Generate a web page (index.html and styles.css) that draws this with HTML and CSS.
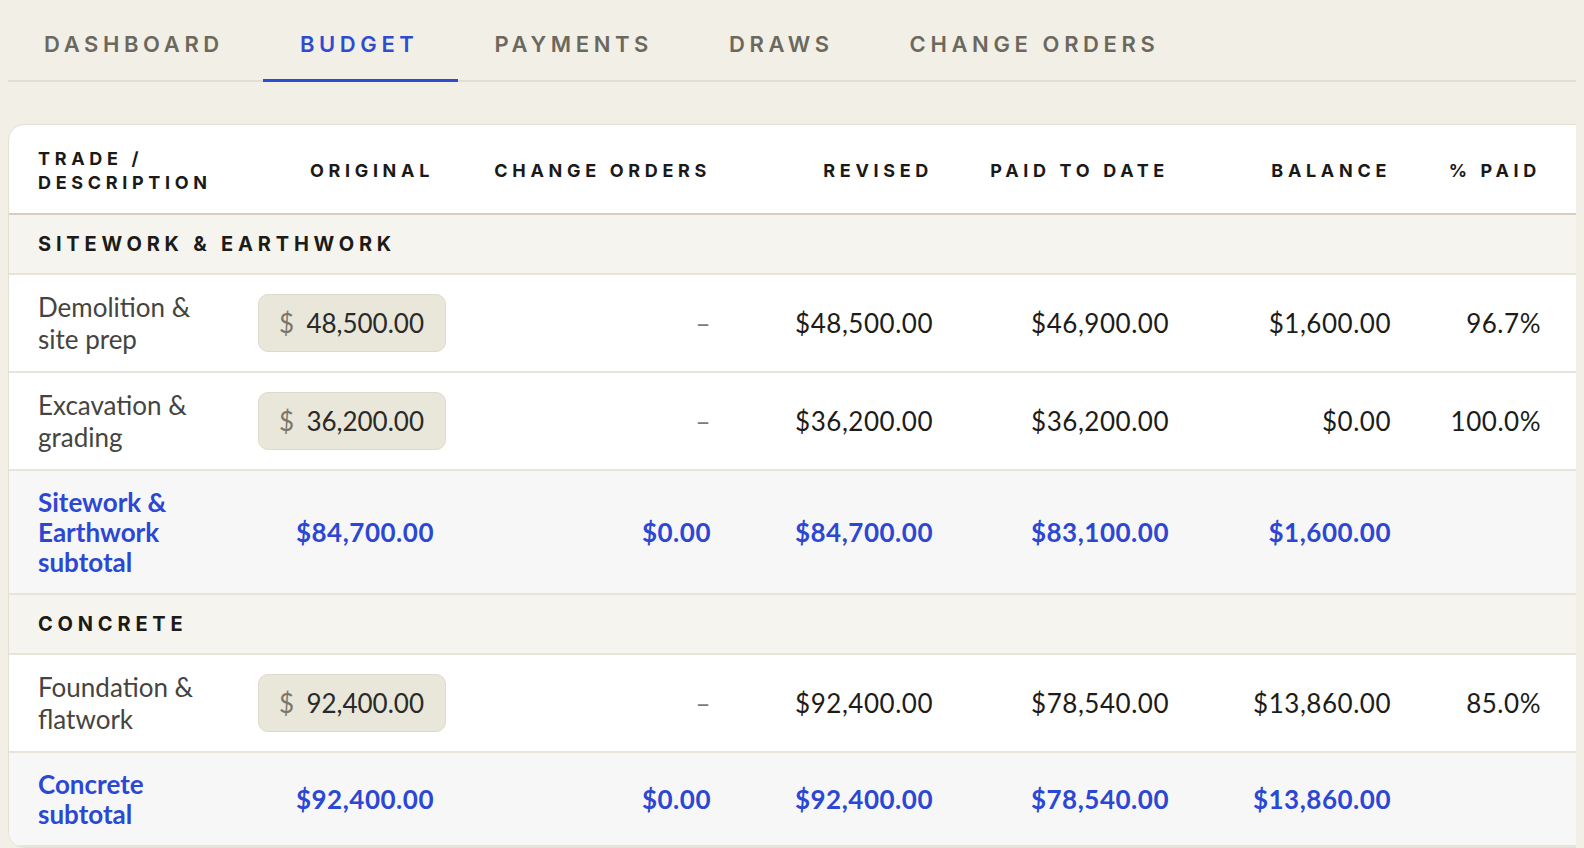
FILE: index.html
```html
<!DOCTYPE html>
<html lang="en">
<head>
  <meta charset="UTF-8">
  <meta name="viewport" content="width=device-width, initial-scale=1.0">
  <title>Budget</title>
  <link rel="stylesheet" href="styles.css">
</head>
<body>
  <nav class="tabs">
    <a class="tab">DASHBOARD</a>
    <a class="tab active">BUDGET</a>
    <a class="tab">PAYMENTS</a>
    <a class="tab">DRAWS</a>
    <a class="tab">CHANGE ORDERS</a>
  </nav>

  <div class="card">
    <table class="budget">
      <colgroup>
        <col class="c-trade">
        <col class="c-orig">
        <col class="c-co">
        <col class="c-rev">
        <col class="c-paid">
        <col class="c-bal">
        <col class="c-pct">
        <col class="c-extra">
      </colgroup>
      <thead>
        <tr>
          <th class="trade">TRADE / DESCRIPTION</th>
          <th>ORIGINAL</th>
          <th>CHANGE ORDERS</th>
          <th>REVISED</th>
          <th>PAID TO DATE</th>
          <th>BALANCE</th>
          <th>% PAID</th>
          <th></th>
        </tr>
      </thead>
      <tbody>
        <tr class="section">
          <td colspan="8">SITEWORK &amp; EARTHWORK</td>
        </tr>
        <tr class="item">
          <td class="trade">Demolition &amp; site prep</td>
          <td><span class="amount-input"><span class="cur">$</span><span>48,500.00</span></span></td>
          <td class="dash">–</td>
          <td>$48,500.00</td>
          <td>$46,900.00</td>
          <td>$1,600.00</td>
          <td>96.7%</td>
          <td></td>
        </tr>
        <tr class="item">
          <td class="trade">Excavation &amp; grading</td>
          <td><span class="amount-input"><span class="cur">$</span><span>36,200.00</span></span></td>
          <td class="dash">–</td>
          <td>$36,200.00</td>
          <td>$36,200.00</td>
          <td>$0.00</td>
          <td>100.0%</td>
          <td></td>
        </tr>
        <tr class="subtotal">
          <td class="trade">Sitework &amp; Earthwork subtotal</td>
          <td>$84,700.00</td>
          <td>$0.00</td>
          <td>$84,700.00</td>
          <td>$83,100.00</td>
          <td>$1,600.00</td>
          <td></td>
          <td></td>
        </tr>
        <tr class="section">
          <td colspan="8">CONCRETE</td>
        </tr>
        <tr class="item">
          <td class="trade">Foundation &amp; flatwork</td>
          <td><span class="amount-input"><span class="cur">$</span><span>92,400.00</span></span></td>
          <td class="dash">–</td>
          <td>$92,400.00</td>
          <td>$78,540.00</td>
          <td>$13,860.00</td>
          <td>85.0%</td>
          <td></td>
        </tr>
        <tr class="subtotal">
          <td class="trade">Concrete subtotal</td>
          <td>$92,400.00</td>
          <td>$0.00</td>
          <td>$92,400.00</td>
          <td>$78,540.00</td>
          <td>$13,860.00</td>
          <td></td>
          <td></td>
        </tr>
      </tbody>
    </table>
  </div>
</body>
</html>
```

FILE: styles.css
```css
html {
    overflow: hidden;
}
body {
    margin: 8px;
    background-color: #f2efe7;
    font-family: Lato, "Open Sans", sans-serif;
    color: #1c1c1a;
}
.tabs {
    display: flex;
    border-bottom: 2px solid #e2ded1;
    height: 72px;
}
.tab {
    display: flex;
    align-items: center;
    padding: 0 39px 0 37px;
    font-family: Inter, sans-serif;
    font-weight: 600;
    font-size: 22px;
    letter-spacing: 0.21em;
    color: #6b685d;
    border-bottom: 3px solid transparent;
    margin-bottom: -2px;
}
.tab:first-child {
    padding-left: 36px;
}
.tab.active {
    color: #2f4bd1;
    border-bottom-color: #2f4bd1;
}
.card {
    margin-top: 42px;
    width: 1660px;
    background-color: #fff;
    border: 1px solid #e3dfd3;
    border-radius: 16px;
    overflow: hidden;
}
.budget {
    table-layout: fixed;
    border-collapse: collapse;
    width: 1660px;
}
.c-trade { width: 235px; }
.c-orig { width: 218px; }
.c-co { width: 277px; }
.c-rev { width: 222px; }
.c-paid { width: 236px; }
.c-bal { width: 222px; }
.c-pct { width: 150px; }
.budget th {
    padding: 22px 28px 18px 12px;
    text-align: right;
    vertical-align: middle;
    font-family: Inter, sans-serif;
    font-weight: 700;
    font-size: 18px;
    line-height: 24px;
    letter-spacing: 0.26em;
    color: #1a1a18;
    border-bottom: 2px solid #d4cfbf;
}
.budget th.trade {
    padding-left: 29px;
    padding-right: 20px;
    text-align: left;
}
.budget td {
    padding: 16px 28px 16px 12px;
    text-align: right;
    vertical-align: middle;
    letter-spacing: 0.02em;
    border-bottom: 2px solid #e8e4d8;
}
.budget td.trade {
    padding-left: 29px;
    padding-right: 20px;
    text-align: left;
    letter-spacing: 0;
}
.budget .section td {
    background-color: #f6f4ee;
    padding: 16px 29px;
    text-align: left;
    font-family: Inter, sans-serif;
    font-weight: 700;
    font-size: 20px;
    line-height: 26px;
    letter-spacing: 0.24em;
    color: #1c1b18;
}
.item td {
    font-size: 26px;
    line-height: 32px;
}
.item td.trade {
    color: #45443f;
}
.item td.dash {
    color: #7d7b72;
}
.amount-input {
    display: inline-flex;
    justify-content: space-between;
    align-items: center;
    box-sizing: border-box;
    width: 188px;
    height: 58px;
    margin-right: -12px;
    padding: 0 21px 0 20px;
    background-color: #e9e6da;
    border: 1px solid #dedacb;
    border-radius: 10px;
    color: #2a2a28;
    letter-spacing: 0;
    vertical-align: middle;
}
.amount-input .cur {
    color: #7a776c;
}
.subtotal td {
    background-color: #f7f7f8;
    color: #2c47d4;
    font-weight: 700;
    font-size: 26px;
    line-height: 30px;
}
```
